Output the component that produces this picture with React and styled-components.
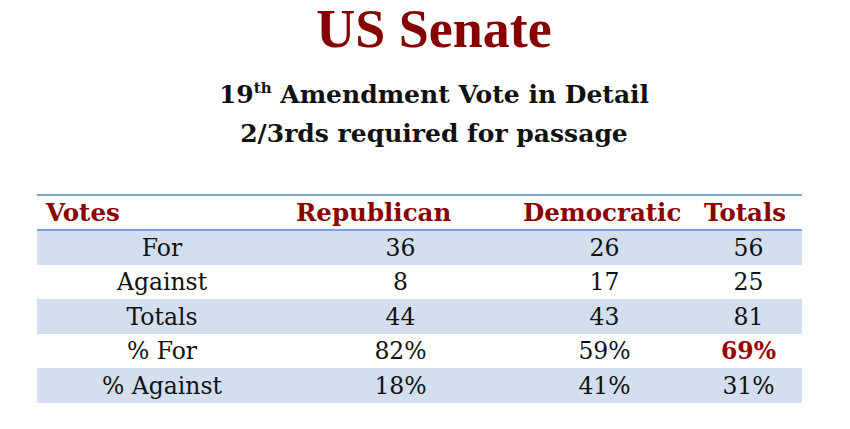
import React from "react";
import styled, { createGlobalStyle } from "styled-components";

const Global = createGlobalStyle`
  html, body { margin: 0; padding: 0; background: #ffffff; }
  body { width: 850px; height: 429px; overflow: hidden; }
`;

const Page = styled.div`
  display: flex;
  flex-direction: column;
  align-items: stretch;
  padding-top: 3px;
`;

const Heading = styled.header`
  display: flex;
  flex-direction: column;
  align-items: center;
  padding-left: 18px;
`;

const Title = styled.h1`
  margin: 0;
  font-family: "Liberation Serif", "Times New Roman", serif;
  font-weight: 700;
  font-size: 54px;
  line-height: 53px;
  color: #860000;
`;

const Subtitle = styled.h2`
  margin: 0;
  font-family: "DejaVu Serif", "Liberation Serif", serif;
  font-weight: 700;
  font-size: 25px;
  line-height: 39px;
  color: #111111;
  &:first-of-type { margin-top: 19px; }
`;

const Sup = styled.sup`
  font-size: 15px;
  line-height: 0;
  vertical-align: 10px;
`;

const Table = styled.table`
  margin: 41px 0 0 37px;
  width: 765px;
  border-collapse: collapse;
  table-layout: fixed;
  font-family: "DejaVu Serif", "Liberation Serif", serif;
`;

const HeadRow = styled.tr`
  border-top: 2px solid #7ea2d6;
  border-bottom: 2px solid #7ea2d6;
  height: 33px;
`;

const Th = styled.th`
  padding: 0 0 0 9px;
  text-align: left;
  font-weight: 700;
  font-size: 24.5px;
  line-height: 33px;
  color: #8a0000;
  white-space: nowrap;
`;

const Row = styled.tr`
  height: ${(p) => p.$h}px;
  background: ${(p) => (p.$shade ? "#d3dfee" : "#ffffff")};
`;

const Td = styled.td`
  padding: 0;
  text-align: center;
  font-size: 23.5px;
  line-height: 34px;
  color: ${(p) => (p.$hot ? "#9a0000" : "#111111")};
  font-weight: ${(p) => (p.$hot ? 700 : 400)};
  white-space: nowrap;
`;

const rows = [
  { label: "For", r: "36", d: "26", t: "56", h: 35 },
  { label: "Against", r: "8", d: "17", t: "25", h: 34 },
  { label: "Totals", r: "44", d: "43", t: "81", h: 35 },
  { label: "% For", r: "82%", d: "59%", t: "69%", hot: true, h: 34 },
  { label: "% Against", r: "18%", d: "41%", t: "31%", h: 35 },
];

export default function App() {
  return (
    <Page>
      <Global />
      <Heading>
        <Title>US Senate</Title>
        <Subtitle>
          19<Sup>th</Sup> Amendment Vote in Detail
        </Subtitle>
        <Subtitle>2/3rds required for passage</Subtitle>
      </Heading>
      <Table>
        <colgroup>
          <col style={{ width: 250 }} />
          <col style={{ width: 227 }} />
          <col style={{ width: 181 }} />
          <col style={{ width: 107 }} />
        </colgroup>
        <thead>
          <HeadRow>
            <Th>Votes</Th>
            <Th>Republican</Th>
            <Th>Democratic</Th>
            <Th>Totals</Th>
          </HeadRow>
        </thead>
        <tbody>
          {rows.map((r, i) => (
            <Row key={r.label} $shade={i % 2 === 0} $h={r.h}>
              <Td>{r.label}</Td>
              <Td>{r.r}</Td>
              <Td>{r.d}</Td>
              <Td $hot={r.hot}>{r.t}</Td>
            </Row>
          ))}
        </tbody>
      </Table>
    </Page>
  );
}
